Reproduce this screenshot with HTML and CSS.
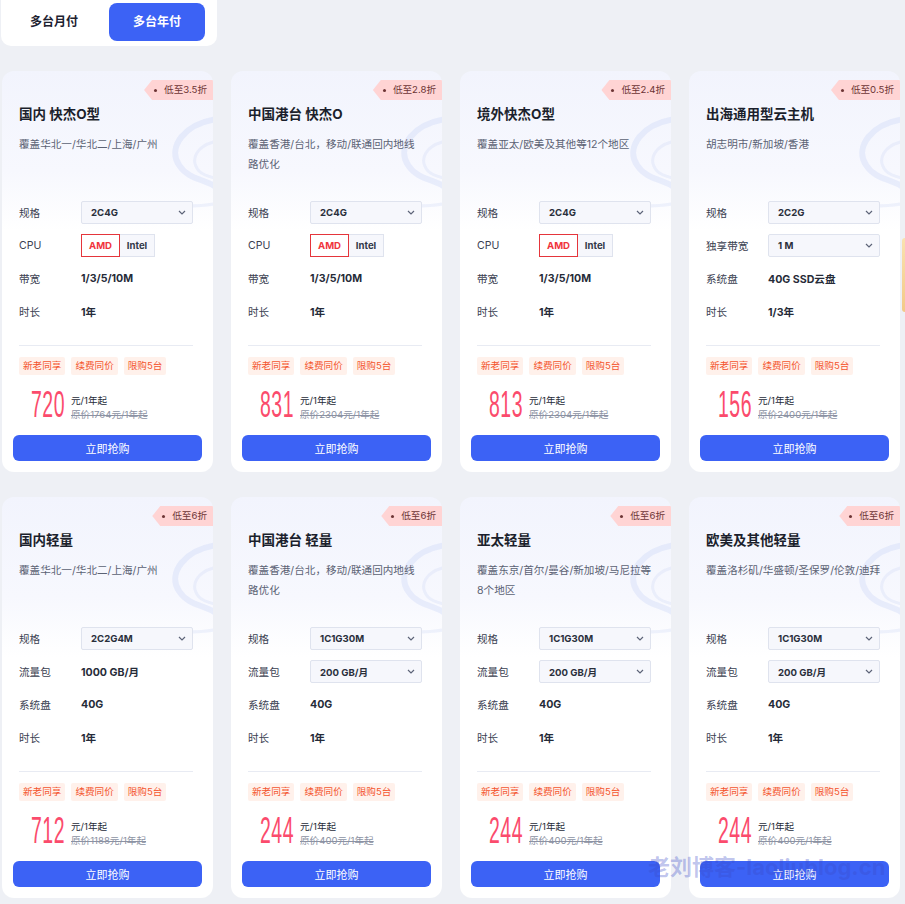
FILE: index.html
```html
<!DOCTYPE html>
<html lang="zh-CN">
<head>
  <meta charset="UTF-8">
  <meta name="viewport" content="width=device-width, initial-scale=1.0">
  <title>云服务器 多台年付</title>
  <link rel="stylesheet" href="styles.css">
</head>
<body>
  <div class="tabs">
    <div class="tab">多台月付</div>
    <div class="tab active">多台年付</div>
  </div>

  <div class="grid">
    <!-- row 1 -->
    <div class="card">
      <div class="badge"><i></i>低至3.5折</div>
      <svg class="swirl" viewBox="0 0 90 130"><path d="M95 22 C62 26 44 50 56 68 C66 84 86 82 95 92"/><path class="thin" d="M95 44 C74 48 66 62 76 74 C82 80 90 80 95 82"/><path class="thin" d="M30 112 C52 106 74 112 95 106"/></svg>
      <div class="head">
        <div class="title">国内 快杰O型</div>
        <div class="desc">覆盖华北一/华北二/上海/广州</div>
      </div>
      <div class="rows">
        <div class="row"><span class="label">规格</span><div class="select">2C4G<svg viewBox="0 0 8 5"><path d="M1 1l3 3 3-3"/></svg></div></div>
        <div class="row"><span class="label">CPU</span><div class="cpu"><span class="on">AMD</span><span>Intel</span></div></div>
        <div class="row"><span class="label">带宽</span><span class="value">1/3/5/10M</span></div>
        <div class="row"><span class="label">时长</span><span class="value">1年</span></div>
      </div>
      <div class="line"></div>
      <div class="tags"><span>新老同享</span><span>续费同价</span><span>限购5台</span></div>
      <div class="price"><span class="num"><b>720</b></span><div class="unit"><div>元/1年起</div><s>原价1764元/1年起</s></div></div>
      <button class="buy">立即抢购</button>
    </div>

    <div class="card">
      <div class="badge"><i></i>低至2.8折</div>
      <svg class="swirl" viewBox="0 0 90 130"><path d="M95 22 C62 26 44 50 56 68 C66 84 86 82 95 92"/><path class="thin" d="M95 44 C74 48 66 62 76 74 C82 80 90 80 95 82"/><path class="thin" d="M30 112 C52 106 74 112 95 106"/></svg>
      <div class="head">
        <div class="title">中国港台 快杰O</div>
        <div class="desc">覆盖香港/台北，移动/联通回内地线<br>路优化</div>
      </div>
      <div class="rows">
        <div class="row"><span class="label">规格</span><div class="select">2C4G<svg viewBox="0 0 8 5"><path d="M1 1l3 3 3-3"/></svg></div></div>
        <div class="row"><span class="label">CPU</span><div class="cpu"><span class="on">AMD</span><span>Intel</span></div></div>
        <div class="row"><span class="label">带宽</span><span class="value">1/3/5/10M</span></div>
        <div class="row"><span class="label">时长</span><span class="value">1年</span></div>
      </div>
      <div class="line"></div>
      <div class="tags"><span>新老同享</span><span>续费同价</span><span>限购5台</span></div>
      <div class="price"><span class="num"><b>831</b></span><div class="unit"><div>元/1年起</div><s>原价2304元/1年起</s></div></div>
      <button class="buy">立即抢购</button>
    </div>

    <div class="card">
      <div class="badge"><i></i>低至2.4折</div>
      <svg class="swirl" viewBox="0 0 90 130"><path d="M95 22 C62 26 44 50 56 68 C66 84 86 82 95 92"/><path class="thin" d="M95 44 C74 48 66 62 76 74 C82 80 90 80 95 82"/><path class="thin" d="M30 112 C52 106 74 112 95 106"/></svg>
      <div class="head">
        <div class="title">境外快杰O型</div>
        <div class="desc">覆盖亚太/欧美及其他等12个地区</div>
      </div>
      <div class="rows">
        <div class="row"><span class="label">规格</span><div class="select">2C4G<svg viewBox="0 0 8 5"><path d="M1 1l3 3 3-3"/></svg></div></div>
        <div class="row"><span class="label">CPU</span><div class="cpu"><span class="on">AMD</span><span>Intel</span></div></div>
        <div class="row"><span class="label">带宽</span><span class="value">1/3/5/10M</span></div>
        <div class="row"><span class="label">时长</span><span class="value">1年</span></div>
      </div>
      <div class="line"></div>
      <div class="tags"><span>新老同享</span><span>续费同价</span><span>限购5台</span></div>
      <div class="price"><span class="num"><b>813</b></span><div class="unit"><div>元/1年起</div><s>原价2304元/1年起</s></div></div>
      <button class="buy">立即抢购</button>
    </div>

    <div class="card">
      <div class="badge"><i></i>低至0.5折</div>
      <svg class="swirl" viewBox="0 0 90 130"><path d="M95 22 C62 26 44 50 56 68 C66 84 86 82 95 92"/><path class="thin" d="M95 44 C74 48 66 62 76 74 C82 80 90 80 95 82"/><path class="thin" d="M30 112 C52 106 74 112 95 106"/></svg>
      <div class="head">
        <div class="title">出海通用型云主机</div>
        <div class="desc">胡志明市/新加坡/香港</div>
      </div>
      <div class="rows">
        <div class="row"><span class="label">规格</span><div class="select">2C2G<svg viewBox="0 0 8 5"><path d="M1 1l3 3 3-3"/></svg></div></div>
        <div class="row"><span class="label">独享带宽</span><div class="select">1 M<svg viewBox="0 0 8 5"><path d="M1 1l3 3 3-3"/></svg></div></div>
        <div class="row"><span class="label">系统盘</span><span class="value">40G SSD云盘</span></div>
        <div class="row"><span class="label">时长</span><span class="value">1/3年</span></div>
      </div>
      <div class="line"></div>
      <div class="tags"><span>新老同享</span><span>续费同价</span><span>限购5台</span></div>
      <div class="price"><span class="num"><b>156</b></span><div class="unit"><div>元/1年起</div><s>原价2400元/1年起</s></div></div>
      <button class="buy">立即抢购</button>
    </div>

    <!-- row 2 -->
    <div class="card">
      <div class="badge"><i></i>低至6折</div>
      <svg class="swirl" viewBox="0 0 90 130"><path d="M95 22 C62 26 44 50 56 68 C66 84 86 82 95 92"/><path class="thin" d="M95 44 C74 48 66 62 76 74 C82 80 90 80 95 82"/><path class="thin" d="M30 112 C52 106 74 112 95 106"/></svg>
      <div class="head">
        <div class="title">国内轻量</div>
        <div class="desc">覆盖华北一/华北二/上海/广州</div>
      </div>
      <div class="rows">
        <div class="row"><span class="label">规格</span><div class="select">2C2G4M<svg viewBox="0 0 8 5"><path d="M1 1l3 3 3-3"/></svg></div></div>
        <div class="row"><span class="label">流量包</span><span class="value">1000 GB/月</span></div>
        <div class="row"><span class="label">系统盘</span><span class="value">40G</span></div>
        <div class="row"><span class="label">时长</span><span class="value">1年</span></div>
      </div>
      <div class="line"></div>
      <div class="tags"><span>新老同享</span><span>续费同价</span><span>限购5台</span></div>
      <div class="price"><span class="num"><b>712</b></span><div class="unit"><div>元/1年起</div><s>原价1188元/1年起</s></div></div>
      <button class="buy">立即抢购</button>
    </div>

    <div class="card">
      <div class="badge"><i></i>低至6折</div>
      <svg class="swirl" viewBox="0 0 90 130"><path d="M95 22 C62 26 44 50 56 68 C66 84 86 82 95 92"/><path class="thin" d="M95 44 C74 48 66 62 76 74 C82 80 90 80 95 82"/><path class="thin" d="M30 112 C52 106 74 112 95 106"/></svg>
      <div class="head">
        <div class="title">中国港台 轻量</div>
        <div class="desc">覆盖香港/台北，移动/联通回内地线<br>路优化</div>
      </div>
      <div class="rows">
        <div class="row"><span class="label">规格</span><div class="select">1C1G30M<svg viewBox="0 0 8 5"><path d="M1 1l3 3 3-3"/></svg></div></div>
        <div class="row"><span class="label">流量包</span><div class="select">200 GB/月<svg viewBox="0 0 8 5"><path d="M1 1l3 3 3-3"/></svg></div></div>
        <div class="row"><span class="label">系统盘</span><span class="value">40G</span></div>
        <div class="row"><span class="label">时长</span><span class="value">1年</span></div>
      </div>
      <div class="line"></div>
      <div class="tags"><span>新老同享</span><span>续费同价</span><span>限购5台</span></div>
      <div class="price"><span class="num"><b>244</b></span><div class="unit"><div>元/1年起</div><s>原价400元/1年起</s></div></div>
      <button class="buy">立即抢购</button>
    </div>

    <div class="card">
      <div class="badge"><i></i>低至6折</div>
      <svg class="swirl" viewBox="0 0 90 130"><path d="M95 22 C62 26 44 50 56 68 C66 84 86 82 95 92"/><path class="thin" d="M95 44 C74 48 66 62 76 74 C82 80 90 80 95 82"/><path class="thin" d="M30 112 C52 106 74 112 95 106"/></svg>
      <div class="head">
        <div class="title">亚太轻量</div>
        <div class="desc">覆盖东京/首尔/曼谷/新加坡/马尼拉等<br>8个地区</div>
      </div>
      <div class="rows">
        <div class="row"><span class="label">规格</span><div class="select">1C1G30M<svg viewBox="0 0 8 5"><path d="M1 1l3 3 3-3"/></svg></div></div>
        <div class="row"><span class="label">流量包</span><div class="select">200 GB/月<svg viewBox="0 0 8 5"><path d="M1 1l3 3 3-3"/></svg></div></div>
        <div class="row"><span class="label">系统盘</span><span class="value">40G</span></div>
        <div class="row"><span class="label">时长</span><span class="value">1年</span></div>
      </div>
      <div class="line"></div>
      <div class="tags"><span>新老同享</span><span>续费同价</span><span>限购5台</span></div>
      <div class="price"><span class="num"><b>244</b></span><div class="unit"><div>元/1年起</div><s>原价400元/1年起</s></div></div>
      <button class="buy">立即抢购</button>
    </div>

    <div class="card">
      <div class="badge"><i></i>低至6折</div>
      <svg class="swirl" viewBox="0 0 90 130"><path d="M95 22 C62 26 44 50 56 68 C66 84 86 82 95 92"/><path class="thin" d="M95 44 C74 48 66 62 76 74 C82 80 90 80 95 82"/><path class="thin" d="M30 112 C52 106 74 112 95 106"/></svg>
      <div class="head">
        <div class="title">欧美及其他轻量</div>
        <div class="desc">覆盖洛杉矶/华盛顿/圣保罗/伦敦/迪拜</div>
      </div>
      <div class="rows">
        <div class="row"><span class="label">规格</span><div class="select">1C1G30M<svg viewBox="0 0 8 5"><path d="M1 1l3 3 3-3"/></svg></div></div>
        <div class="row"><span class="label">流量包</span><div class="select">200 GB/月<svg viewBox="0 0 8 5"><path d="M1 1l3 3 3-3"/></svg></div></div>
        <div class="row"><span class="label">系统盘</span><span class="value">40G</span></div>
        <div class="row"><span class="label">时长</span><span class="value">1年</span></div>
      </div>
      <div class="line"></div>
      <div class="tags"><span>新老同享</span><span>续费同价</span><span>限购5台</span></div>
      <div class="price"><span class="num"><b>244</b></span><div class="unit"><div>元/1年起</div><s>原价400元/1年起</s></div></div>
      <button class="buy">立即抢购</button>
    </div>
  </div>

  <div class="float-ball"></div>
  <div class="watermark">老刘博客-laoliublog.cn</div>
</body>
</html>
```

FILE: styles.css
```css
body {
  margin: 0;
  background-color: #eef0f5;
  font-family: Inter, "Noto Sans CJK SC", sans-serif;
  color: #2a2f3b;
  overflow: hidden;
  position: relative;
  height: 904px;
}
.tabs {
  display: flex;
  gap: 7px;
  width: 199px;
  margin-left: 1px;
  padding: 3px 12px 5px 5px;
  background-color: #fff;
  border-radius: 0 0 10px 10px;
}
.tab {
  width: 96px;
  height: 38px;
  line-height: 38px;
  text-align: center;
  font-size: 12px;
  font-weight: 700;
  color: #1d2130;
  border-radius: 8px;
}
.tab.active {
  background-color: #3c62f5;
  color: #fff;
}
.grid {
  display: grid;
  grid-template-columns: repeat(4, 211px);
  column-gap: 18px;
  row-gap: 25px;
  margin: 25px 0 0 2px;
}
.card {
  position: relative;
  overflow: hidden;
  padding: 33px 11px 11px;
  border-radius: 12px;
  background: linear-gradient(180deg, #f2f4fd 0%, #f7f8fe 100px, #fff 160px);
}
.swirl {
  position: absolute;
  top: 26px;
  right: 0;
  width: 90px;
  height: 130px;
  fill: none;
}
.swirl path {
  stroke: rgba(200, 212, 246, 0.35);
  stroke-width: 6;
}
.swirl path.thin {
  stroke-width: 3;
  stroke: rgba(205, 216, 246, 0.3);
}
.badge {
  position: absolute;
  top: 9px;
  right: 0;
  height: 20px;
  line-height: 20px;
  padding: 0 6px 0 20px;
  background-color: #ffd4d4;
  color: #6d3535;
  font-size: 9.6px;
  clip-path: polygon(8px 0, 100% 0, 100% 100%, 8px 100%, 0 50%);
}
.badge i {
  position: absolute;
  left: 10px;
  top: 9px;
  width: 3px;
  height: 3px;
  border-radius: 50%;
  background-color: #6d3535;
}
.head {
  position: relative;
  height: 91px;
  padding: 0 9px 0 6px;
}
.title {
  font-size: 13.5px;
  font-weight: 700;
  line-height: 20px;
  color: #1b1f2c;
}
.desc {
  margin-top: 11px;
  font-size: 10.6px;
  line-height: 20px;
  color: #5b6274;
  white-space: nowrap;
}
.rows {
  position: relative;
  padding: 0 9px 0 6px;
}
.row {
  display: flex;
  align-items: center;
  height: 33px;
}
.row:first-child {
  margin-top: 1px;
}
.label {
  width: 62px;
  flex-shrink: 0;
  font-size: 10.6px;
  color: #3a4050;
  white-space: nowrap;
}
.value {
  font-size: 10.6px;
  font-weight: 700;
  color: #262b38;
}
.select {
  display: flex;
  align-items: center;
  justify-content: space-between;
  box-sizing: border-box;
  width: 112px;
  height: 23px;
  padding: 0 6px 0 9px;
  border: 1px solid #dfe3ee;
  border-radius: 2px;
  background-color: #f6f7fc;
  font-size: 9.6px;
  font-weight: 700;
  color: #2a2f3b;
}
.select svg {
  width: 8px;
  height: 5px;
  fill: none;
  stroke: #5d6478;
  stroke-width: 1.2;
}
.cpu {
  display: flex;
}
.cpu span {
  box-sizing: border-box;
  height: 23px;
  line-height: 21px;
  text-align: center;
  width: 35px;
  border: 1px solid #dfe3ee;
  border-left: none;
  background-color: #f6f7fc;
  font-size: 9.6px;
  font-weight: 700;
  color: #333949;
}
.cpu span.on {
  width: 39px;
  border: 1px solid #e5353b;
  background-color: #fff;
  color: #f0343c;
}
.line {
  height: 1px;
  margin: 17px 9px 0 6px;
  background-color: #e8ebf3;
}
.tags {
  display: flex;
  gap: 6px;
  margin: 11px 0 0 6px;
}
.tags span {
  height: 18px;
  line-height: 18px;
  padding: 0 4px;
  border-radius: 2px;
  background-color: #fff1eb;
  color: #f4552e;
  font-size: 9.6px;
}
.price {
  display: flex;
  margin: 17px 0 0 18px;
  height: 30px;
}
.num {
  width: 40px;
  height: 26px;
  flex-shrink: 0;
}
.num b {
  display: inline-block;
  font-family: "Liberation Sans", Arial, sans-serif;
  font-weight: 400;
  font-size: 36px;
  line-height: 26px;
  color: #fb4b6c;
  transform: scaleX(0.54);
  transform-origin: left center;
  letter-spacing: 1px;
}
.unit {
  padding-top: 2px;
  font-size: 9.6px;
  line-height: 14px;
  color: #262b38;
  white-space: nowrap;
}
.unit s {
  color: #8c92a3;
}
.buy {
  display: block;
  width: 100%;
  height: 26px;
  margin-top: 13px;
  border: none;
  border-radius: 6px;
  background-color: #3c62f5;
  color: #fff;
  font-family: inherit;
  font-size: 11px;
  cursor: pointer;
}
.float-ball {
  position: absolute;
  left: 902px;
  top: 238px;
  width: 3px;
  height: 74px;
  border-radius: 37px 0 0 37px / 37px 0 0 37px;
  background: linear-gradient(180deg, #f9e2b0, #f3c987);
}
.watermark {
  position: absolute;
  z-index: 5;
  left: 648px;
  top: 853px;
  font-size: 22px;
  font-weight: 700;
  line-height: 28px;
  color: rgba(58, 74, 200, 0.32);
  white-space: nowrap;
  pointer-events: none;
}
```
